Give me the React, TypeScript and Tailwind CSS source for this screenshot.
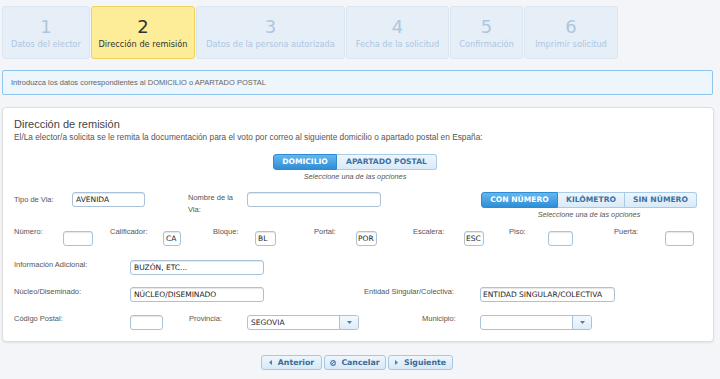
const dejavu = "font-['DejaVu_Sans',Verdana,sans-serif]";

const steps = [
  { n: '1', label: 'Datos del elector', w: 'w-[88px]' },
  { n: '2', label: 'Dirección de remisión', w: 'w-[104px]', active: true },
  { n: '3', label: 'Datos de la persona autorizada', w: 'w-[149px]' },
  { n: '4', label: 'Fecha de la solicitud', w: 'w-[103px]' },
  { n: '5', label: 'Confirmación', w: 'w-[73px]' },
  { n: '6', label: 'Imprimir solicitud', w: 'w-[94px]' },
];

function Field({ w, value = '', mt = '', px = 'px-[3px]' }: { w: string; value?: string; mt?: string; px?: string }) {
  return (
    <input
      readOnly
      value={value}
      className={`${w} ${mt} ${px} h-[15px] shrink-0 rounded-[3px] border border-[#a9c2d8] bg-white text-[7.5px] text-[#222] shadow-[inset_0_1px_1px_rgba(0,0,0,0.1)] outline-none ${dejavu}`}
    />
  );
}

function Select({ w, value = '' }: { w: string; value?: string }) {
  return (
    <div className={`${w} flex h-[15px] shrink-0 overflow-hidden rounded-[3px] border border-[#a9c2d8] bg-white`}>
      <div className={`flex flex-1 items-center px-[3px] text-[7.5px] text-[#222] ${dejavu}`}>{value}</div>
      <div className="flex w-[19px] items-center justify-center border-l border-[#a9c2d8] bg-linear-to-b from-[#f4f9fd] to-[#dfecf8]">
        <svg width="5" height="3" viewBox="0 0 5 3">
          <path d="M0 0h5L2.5 3z" fill="#4a7fb5" />
        </svg>
      </div>
    </div>
  );
}

function Seg({ items, widths }: { items: string[]; widths: string[] }) {
  return (
    <div className="flex">
      {items.map((t, i) => (
        <div
          key={t}
          className={`${widths[i]} flex h-[16px] items-center justify-center border text-[7.6px] font-bold ${dejavu} ${
            i === 0
              ? 'rounded-l-[3px] border-[#2f8ad0] bg-linear-to-b from-[#62b7f0] to-[#2e8ed6] text-white'
              : 'border-l-0 border-[#a8cbe8] bg-linear-to-b from-[#eef6fd] to-[#d9eaf8] text-[#3d6f9f]'
          } ${i === items.length - 1 ? 'rounded-r-[3px]' : ''}`}
        >
          {t}
        </div>
      ))}
    </div>
  );
}

function Caption() {
  return <div className="mt-[2px] text-[7.3px] leading-[9px] italic text-[#555]">Seleccione una de las opciones</div>;
}

export default function App() {
  return (
    <div className="h-[379px] w-[720px] overflow-hidden bg-[#f3f5f9] font-['Liberation_Sans',Arial,sans-serif] text-[#555]">
      {/* wizard steps */}
      <div className="flex gap-px pl-[2px] pt-[6px]">
        {steps.map((s) => (
          <div
            key={s.n}
            className={`${s.w} flex h-[53px] flex-col items-center rounded-[3px] border pt-[10px] ${dejavu} ${
              s.active ? 'border-[#f0d25c] bg-[#fdec98] text-[#333]' : 'border-[#dbe6f1] bg-[#e6eef8] text-[#adc7e0]'
            }`}
          >
            <div className="text-[18px] leading-[20px]">{s.n}</div>
            <div className="mt-[2px] whitespace-nowrap text-[8.2px] leading-[10px]">{s.label}</div>
          </div>
        ))}
      </div>

      <div className="ml-[2px] mt-[11px] flex h-[25px] w-[711px] items-center rounded-[2px] border border-[#8ec5ee] bg-[#edf5fd] pl-[8px] text-[7.5px] text-[#666]">
        Introduzca los datos correspondientes al DOMICILIO o APARTADO POSTAL
      </div>

      {/* form panel */}
      <div className="ml-[2px] mt-[12px] h-[235px] w-[712px] rounded-[4px] border border-[#dedede] bg-white pl-[11px] pt-[9px] shadow-[0_1px_2px_rgba(0,0,0,0.08)]">
        <div className="text-[11px] leading-[14px] text-[#444]">Dirección de remisión</div>
        <div className="mt-[1px] text-[8.3px] leading-[10px] text-[#555]">
          El/La elector/a solicita se le remita la documentación para el voto por correo al siguiente domicilio o apartado postal en España:
        </div>

        <div className="ml-[259px] mt-[12px] flex w-[164px] flex-col items-center">
          <Seg items={['DOMICILIO', 'APARTADO POSTAL']} widths={['w-[64px]', 'w-[100px]']} />
          <Caption />
        </div>

        <div className="mt-[11px] flex items-start text-[7.5px]">
          <div className="w-[58px] leading-[15px]">Tipo de Via:</div>
          <Field w="w-[73px]" value="AVENIDA" />
          <div className="ml-[43px] w-[59px] leading-[12px]">
            Nombre de la
            <br />
            Via:
          </div>
          <Field w="w-[134px]" />
          <div className="ml-[100px] flex flex-col items-center">
            <Seg items={['CON NÚMERO', 'KILÓMETRO', 'SIN NÚMERO']} widths={['w-[77px]', 'w-[67px]', 'w-[72px]']} />
            <Caption />
          </div>
        </div>

        <div className="mt-[8px] flex items-start text-[7.5px] leading-[10px]">
          <div className="w-[49px]">Número:</div>
          <Field w="w-[30px]" mt="mt-[4px]" />
          <div className="ml-[17px] w-[53px]">Calificador:</div>
          <Field w="w-[18px]" mt="mt-[4px]" px="px-[2px]" value="CA" />
          <div className="ml-[32px] w-[42px]">Bloque:</div>
          <Field w="w-[21px]" mt="mt-[4px]" px="px-[2px]" value="BL" />
          <div className="ml-[38px] w-[42px]">Portal:</div>
          <Field w="w-[21px]" mt="mt-[4px]" px="px-[1px]" value="POR" />
          <div className="ml-[36px] w-[51px]">Escalera:</div>
          <Field w="w-[20px]" mt="mt-[4px]" px="px-[1px]" value="ESC" />
          <div className="ml-[25px] w-[39px]">Piso:</div>
          <Field w="w-[25px]" mt="mt-[4px]" />
          <div className="ml-[41px] w-[51px]">Puerta:</div>
          <Field w="w-[29px]" mt="mt-[4px]" />
        </div>

        <div className="mt-[14px] flex items-start text-[7.5px] leading-[10px]">
          <div className="w-[116px]">Información Adicional:</div>
          <Field w="w-[134px]" value="BUZÓN, ETC..." />
        </div>

        <div className="mt-[12px] flex items-start text-[7.5px] leading-[10px]">
          <div className="w-[116px]">Núcleo/Diseminado:</div>
          <Field w="w-[134px]" value="NÚCLEO/DISEMINADO" />
          <div className="ml-[100px] w-[116px]">Entidad Singular/Colectiva:</div>
          <Field w="w-[135px]" px="px-[2px]" value="ENTIDAD SINGULAR/COLECTIVA" />
        </div>

        <div className="mt-[13px] flex items-start text-[7.5px] leading-[8px]">
          <div className="w-[116px]">Código Postal:</div>
          <Field w="w-[33px]" />
          <div className="ml-[26px] w-[58px]">Provincia:</div>
          <Select w="w-[112px]" value="SEGOVIA" />
          <div className="ml-[63px] w-[58px]">Municipio:</div>
          <Select w="w-[112px]" />
        </div>
      </div>

      {/* navigation */}
      <div className={`ml-[261px] mt-[13px] flex gap-[2px] text-[7.8px] font-bold text-[#3b6a96] ${dejavu}`}>
        <button className="flex h-[15px] w-[61px] items-center justify-center gap-[6px] rounded-[3px] border border-[#a6c8e6] bg-linear-to-b from-[#eef6fd] to-[#d8e9f7]">
          <svg width="3" height="5" viewBox="0 0 3 5"><path d="M3 0v5L0 2.5z" fill="#4a7fb5" /></svg>
          Anterior
        </button>
        <button className="flex h-[15px] w-[62px] items-center justify-center gap-[5px] rounded-[3px] border border-[#a6c8e6] bg-linear-to-b from-[#eef6fd] to-[#d8e9f7]">
          <svg width="6" height="6" viewBox="0 0 6 6">
            <circle cx="3" cy="3" r="2.3" fill="none" stroke="#4a7fb5" strokeWidth="1.2" />
            <path d="M1.4 4.6L4.6 1.4" stroke="#4a7fb5" strokeWidth="1" />
          </svg>
          Cancelar
        </button>
        <button className="flex h-[15px] w-[65px] items-center justify-center gap-[6px] rounded-[3px] border border-[#a6c8e6] bg-linear-to-b from-[#eef6fd] to-[#d8e9f7]">
          <svg width="3" height="5" viewBox="0 0 3 5"><path d="M0 0v5L3 2.5z" fill="#4a7fb5" /></svg>
          Siguiente
        </button>
      </div>
    </div>
  );
}
